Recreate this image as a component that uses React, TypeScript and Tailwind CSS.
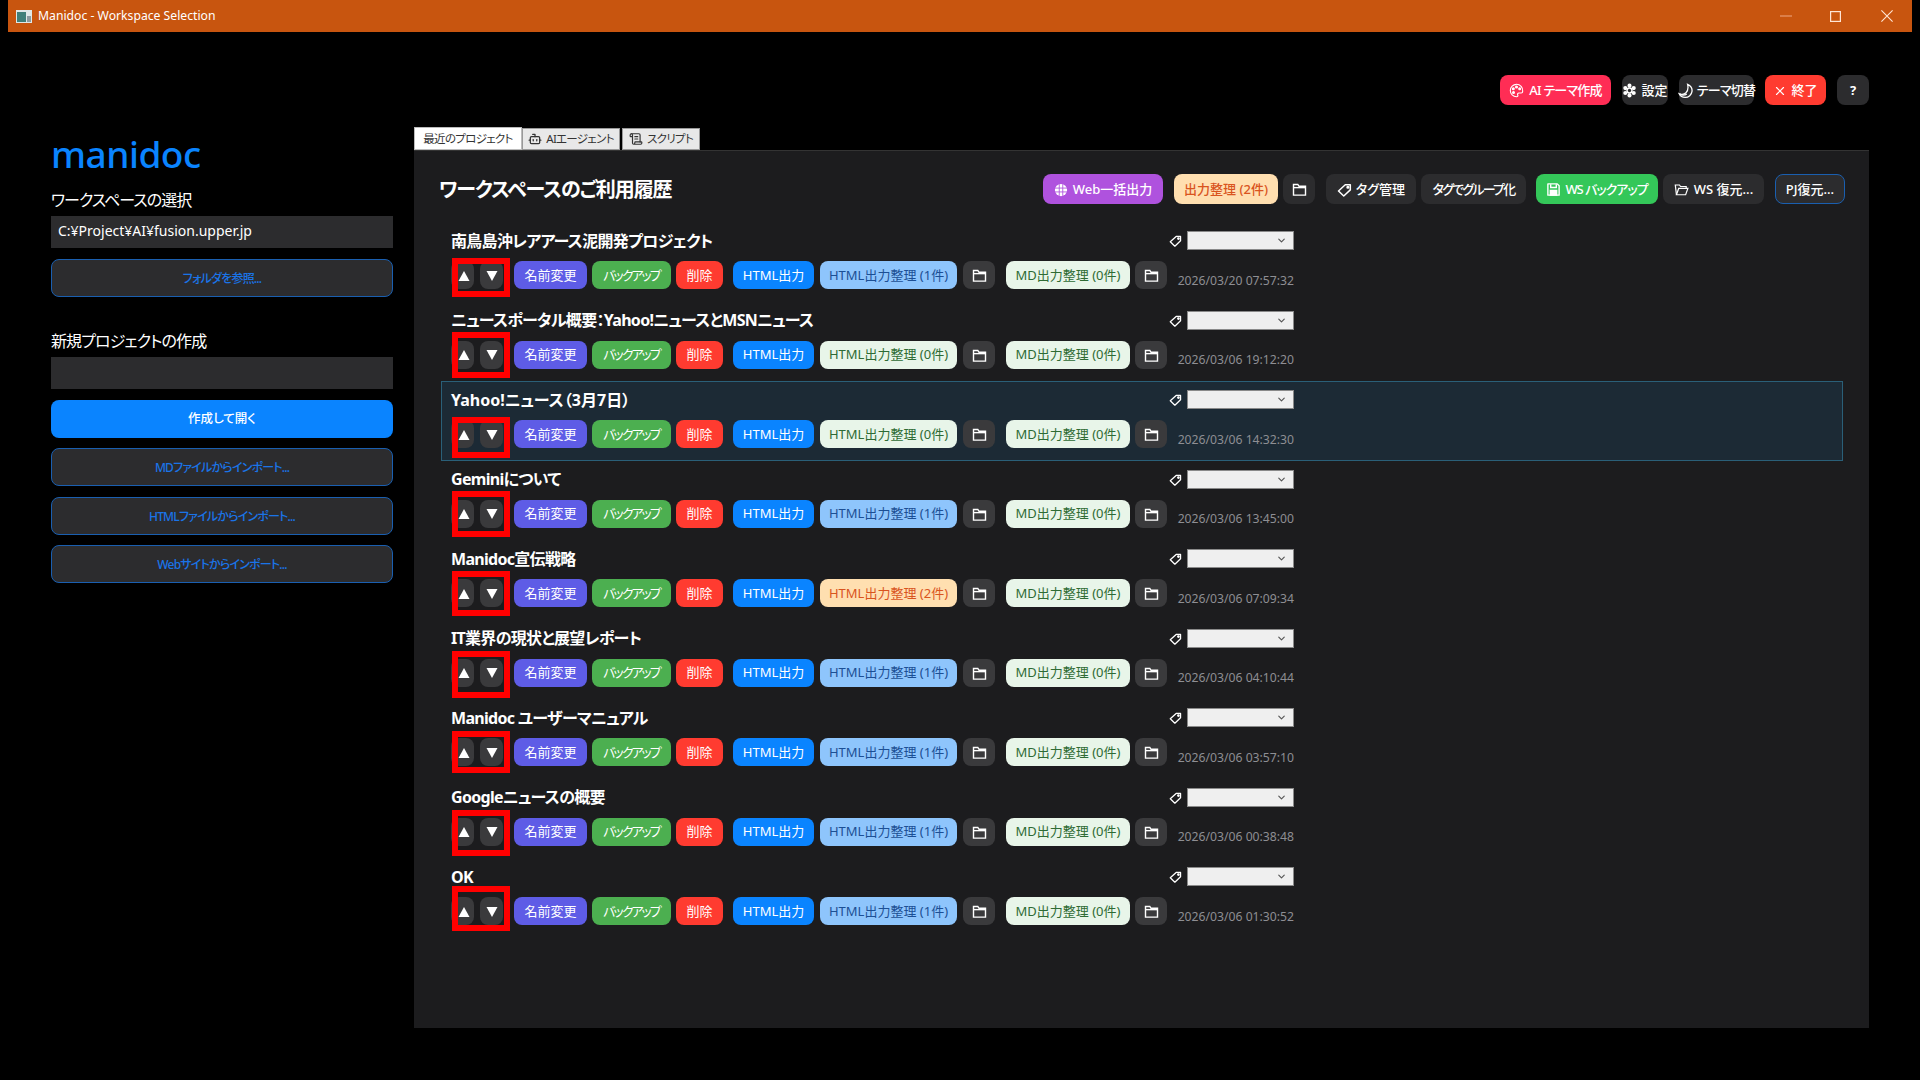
import { Bot, ScrollText, X, ChevronDown } from "lucide-react";

function FolderIcon({ className = "w-[15px] h-[15px]" }: { className?: string }) {
  return (
    <svg viewBox="0 0 16 16" className={className} fill="none" stroke="currentColor" strokeWidth="1.5">
      <path d="M1.6 14V2.6h4.6l1.3 2h6.9V14z" />
      <path d="M1.6 6h12.8" />
    </svg>
  );
}

function OpenFolderIcon() {
  return (
    <svg viewBox="0 0 16 16" className="h-[15px] w-[15px]" fill="none" stroke="currentColor" strokeWidth="1.3">
      <path d="M2.6 13.6 1.4 3.2h4.4l1.2 1.6h6v2" />
      <path d="M2.6 13.6h9.8l2.4-6.7H5z" />
    </svg>
  );
}

function TagIcon({ className = "w-[15px] h-[15px]" }: { className?: string }) {
  return (
    <svg viewBox="0 0 16 16" className={className} fill="none" stroke="currentColor" strokeWidth="1.6">
      <path d="M1.6 9.6 8.8 3h5.4v5.4l-7 6.6z" strokeLinejoin="round" />
      <circle cx="11.6" cy="5.6" r="0.9" fill="currentColor" />
    </svg>
  );
}

function GlobeIcon() {
  return (
    <svg viewBox="0 0 16 16" className="h-[14px] w-[14px]">
      <circle cx="8" cy="8" r="7" fill="#fff" />
      <path d="M1 5.8h14M1 10.2h14M6 1.4v13.2M10 1.4v13.2" stroke="#af52de" strokeWidth="1" fill="none" />
    </svg>
  );
}

function PaletteIcon() {
  return (
    <svg viewBox="0 0 16 16" className="h-[15px] w-[15px]" fill="none" stroke="#fff" strokeWidth="1.2">
      <path d="M8 1.4a6.6 6.6 0 1 0 0 13.2c1.6 0 1.8-1 1.3-1.9-.6-1.1.1-2 1.3-2h2.4c1 0 1.6-.7 1.6-1.9A6.6 6.6 0 0 0 8 1.4z" />
      <circle cx="4.6" cy="6" r="1" fill="#fff" />
      <circle cx="8" cy="4.2" r="1" fill="#fff" />
      <circle cx="11.4" cy="6" r="1" fill="#fff" />
      <circle cx="4.8" cy="10" r="1" fill="#fff" />
    </svg>
  );
}

function GearIcon() {
  return (
    <svg viewBox="0 0 16 16" className="h-[15px] w-[15px]" fill="#fff">
      <circle cx="8" cy="2.8" r="2.2" />
      <circle cx="12.5" cy="5.4" r="2.2" />
      <circle cx="12.5" cy="10.6" r="2.2" />
      <circle cx="8" cy="13.2" r="2.2" />
      <circle cx="3.5" cy="10.6" r="2.2" />
      <circle cx="3.5" cy="5.4" r="2.2" />
      <circle cx="8" cy="8" r="3.4" />
      <circle cx="8" cy="8" r="1.8" fill="#2c2c2e" />
    </svg>
  );
}

function MoonIcon() {
  return (
    <svg viewBox="0 0 16 16" className="h-[16px] w-[16px] shrink-0" fill="none" stroke="#fff" strokeWidth="1.3">
      <path d="M9.6 1.4c3 1.4 4.8 4 4.4 7-.4 3.4-3.4 6-6.8 6-2.6 0-5-1.4-6-3.6 2.4 1 5.2.6 6.8-1 1.8-1.8 2.4-5 1.6-8.4z" />
      <path d="M1.6 10.8c1.4 1.6 5 2 7.2.2" />
    </svg>
  );
}

function SaveIcon() {
  return (
    <svg viewBox="0 0 16 16" className="h-[15px] w-[15px]" fill="none" stroke="#fff" strokeWidth="1.5">
      <path d="M2 2h10l2 2v10H2z" strokeLinejoin="round" />
      <path d="M5 2.4v3.4h6V2.4" />
      <rect x="4.6" y="9" width="6.8" height="5" fill="#fff" />
    </svg>
  );
}

function Btn({ className, children }: { className: string; children: React.ReactNode }) {
  return (
    <button className={`flex items-center justify-center rounded-[8px] pt-[1px] text-[13px] whitespace-nowrap ${className}`}>
      {children}
    </button>
  );
}

function OutlineBtn({ label }: { label: string }) {
  return (
    <button className="h-[38px] w-full rounded-[8px] border border-[#1a5fb0] bg-[#2c2c2e] pt-[2px] text-[12px] font-medium tracking-[-0.8px] text-[#1a74e8]">
      {label}
    </button>
  );
}

const blue = "bg-[#8ec5fc] text-[#1c4f94]";
const pale = "bg-[#e8f5e9] text-[#2e6b34]";
const orange = "bg-[#ffdfb0] text-[#d9541e]";

// mark is the hand-drawn red box on each row: offset from the button row, and height
const projects = [
  { name: "南鳥島沖レアアース泥開発プロジェクト", html: 1, date: "2026/03/20 07:57:32", markTop: "top-[-3px]", markH: "h-[39px]" },
  { name: "ニュースポータル概要：Yahoo!ニュースとMSNニュース", html: 0, date: "2026/03/06 19:12:20", markTop: "top-[-9px]", markH: "h-[46px]" },
  { name: "Yahoo!ニュース（3月7日）", html: 0, date: "2026/03/06 14:32:30", active: true, markTop: "top-[-3px]", markH: "h-[41px]" },
  { name: "Geminiについて", html: 1, date: "2026/03/06 13:45:00", markTop: "top-[-9px]", markH: "h-[46px]" },
  { name: "Manidoc宣伝戦略", html: 2, date: "2026/03/06 07:09:34", markTop: "top-[-8px]", markH: "h-[45px]" },
  { name: "IT業界の現状と展望レポート", html: 1, date: "2026/03/06 04:10:44", markTop: "top-[-8px]", markH: "h-[47px]" },
  { name: "Manidoc ユーザーマニュアル", html: 1, date: "2026/03/06 03:57:10", markTop: "top-[-7px]", markH: "h-[42px]" },
  { name: "Googleニュースの概要", html: 1, date: "2026/03/06 00:38:48", markTop: "top-[-8px]", markH: "h-[46px]" },
  { name: "OK", html: 1, date: "2026/03/06 01:30:52", markTop: "top-[-11px]", markH: "h-[45px]" },
];

function ProjectRow({ p }: { p: (typeof projects)[number] }) {
  const htmlStyle = p.html === 2 ? orange : p.html === 1 ? blue : pale;
  return (
    <div
      className={`h-[79.5px] w-[1402px] border pl-[9px] pt-[8px] ${
        p.active ? "border-[#2a5f78] bg-[#1c2a35]" : "border-transparent"
      }`}
    >
      <div className="flex h-[19px] w-[843px] items-center justify-between">
        <span className={`text-[16px] font-bold text-white ${p.active ? "" : "tracking-[-0.7px]"}`}>{p.name}</span>
        <div className="flex items-center gap-[5px]">
          <TagIcon className="h-[13px] w-[13px] text-white" />
          <div className="flex h-[19px] w-[107px] items-center justify-end border border-[#8a8a8a] bg-[#efefef] pr-[6px]">
            <ChevronDown size={11} strokeWidth={2.5} className="text-[#555]" />
          </div>
        </div>
      </div>
      <div className="relative mt-[11px] flex h-[28px] w-[843px] items-center">
        <Btn className="h-full w-[23px] bg-[#3a3a3c] pl-[2px] text-white">
          <svg viewBox="0 0 12 12" className="h-[12px] w-[12px]" fill="#fff"><path d="M6 1 11.5 11H.5z" /></svg>
        </Btn>
        <Btn className="ml-[6px] h-full w-[23px] bg-[#3a3a3c] text-white">
          <svg viewBox="0 0 12 12" className="h-[12px] w-[12px]" fill="#fff"><path d="M6 11 11.5 1H.5z" /></svg>
        </Btn>
        <Btn className="ml-[11px] h-full w-[73px] bg-[#5e5ce6] text-white">名前変更</Btn>
        <Btn className="ml-[5px] h-full w-[79px] bg-[#4caf50] tracking-[-2px] text-white">バックアップ</Btn>
        <Btn className="ml-[5px] h-full w-[47px] bg-[#ff3b30] text-white">削除</Btn>
        <Btn className="ml-[10px] h-full w-[81px] bg-[#0a84ff] text-white">HTML出力</Btn>
        <Btn className={`ml-[6px] h-full w-[137px] ${htmlStyle}`}>{`HTML出力整理 (${p.html}件)`}</Btn>
        <Btn className="ml-[6px] h-full w-[32px] bg-[#3a3a3c] text-white"><FolderIcon /></Btn>
        <Btn className={`ml-[11px] h-full w-[124px] ${pale}`}>MD出力整理 (0件)</Btn>
        <Btn className="ml-[5px] h-full w-[32px] bg-[#3a3a3c] text-white"><FolderIcon /></Btn>
        <span className="ml-auto pt-[12px] text-[12.2px] whitespace-nowrap text-[#8e8e93]">{p.date}</span>
        {/* red annotation drawn over the sort buttons */}
        <div className={`pointer-events-none absolute left-[1px] w-[58px] border-[6px] border-[#ff0000] ${p.markTop} ${p.markH}`} />
      </div>
    </div>
  );
}

export default function App() {
  return (
    <div className="flex h-screen w-full flex-col overflow-hidden bg-black font-['Noto_Sans','Noto_Sans_CJK_JP',sans-serif] [font-feature-settings:'palt']">
      <div className="mx-[8px] flex h-[32px] shrink-0 items-center bg-[#c8550f] text-white">
        <svg viewBox="0 0 16 13" className="ml-[8px] h-[13px] w-[16px]">
          <rect width="16" height="13" fill="#dfe7e8" />
          <rect x="1" y="2" width="9" height="10" fill="#3f7f7a" />
          <rect x="11" y="6" width="4" height="6" fill="#8a9aa0" />
        </svg>
        <span className="ml-[6px] text-[12.2px]">Manidoc - Workspace Selection</span>
        <div className="ml-auto flex items-center">
          <svg viewBox="0 0 12 12" className="mr-[38px] h-[12px] w-[12px]" stroke="#e89a70" strokeWidth="1.2"><path d="M0 6h12" /></svg>
          <svg viewBox="0 0 11 11" className="mr-[40px] h-[11px] w-[11px]" fill="none" stroke="#ffe5d5" strokeWidth="1.2"><rect x=".6" y=".6" width="9.8" height="9.8" /></svg>
          <svg viewBox="0 0 12 12" className="mr-[19px] h-[12px] w-[12px]" stroke="#ffe5d5" strokeWidth="1.1"><path d="M.4.4l11.2 11.2M11.6.4.4 11.6" /></svg>
        </div>
      </div>

      <div className="mt-[43px] flex h-[30px] shrink-0 justify-end gap-[11px] pr-[51px] font-medium text-white">
        <Btn className="w-[111px] gap-[5px] bg-[#ff2d55] tracking-[-0.8px]"><PaletteIcon />AI テーマ作成</Btn>
        <Btn className="w-[46px] gap-[4px] bg-[#2c2c2e]"><GearIcon />設定</Btn>
        <Btn className="w-[75px] gap-[3px] bg-[#2c2c2e] tracking-[-0.8px]"><MoonIcon />テーマ切替</Btn>
        <Btn className="w-[61px] gap-[4px] bg-[#ff3b30]"><X size={14} />終了</Btn>
        <Btn className="w-[32px] bg-[#2c2c2e] font-bold">?</Btn>
      </div>

      <div className="mt-[22px] flex min-h-0 flex-1 pl-[51px]">
        <aside className="w-[342px] shrink-0">
          <div className="mt-[2px] text-[37px] leading-[50px] font-medium tracking-[-0.5px] text-[#0a84ff]">manidoc</div>
          <div className="mt-[9px] text-[16px] leading-[24px] tracking-[-1px] text-white">ワークスペースの選択</div>
          <div className="mt-[4px] flex h-[32px] items-center bg-[#2c2c2e] px-[7px] pb-[3px] text-[14px] text-white">
            C:¥Project¥AI¥fusion.upper.jp
          </div>
          <div className="mt-[11px]"><OutlineBtn label="フォルダを参照..." /></div>
          <div className="mt-[32px] text-[16px] leading-[24px] tracking-[-0.9px] text-white">新規プロジェクトの作成</div>
          <div className="mt-[4px] h-[32px] bg-[#2c2c2e]" />
          <button className="mt-[11px] h-[38px] w-full rounded-[8px] bg-[#0a84ff] pt-[1px] text-[12.5px] font-medium text-white">
            作成して開く
          </button>
          <div className="mt-[10px] flex flex-col gap-[10.5px]">
            <OutlineBtn label="MDファイルからインポート..." />
            <OutlineBtn label="HTMLファイルからインポート..." />
            <OutlineBtn label="Webサイトからインポート..." />
          </div>
        </aside>

        <main className="ml-[21px] w-[1455px] shrink-0">
          <div className="flex h-[23px] items-end text-[11.5px] tracking-[-0.7px] whitespace-nowrap text-[#333]">
            <div className="flex h-[23px] w-[108px] items-center justify-center border border-[#bbb] bg-white">最近のプロジェクト</div>
            <div className="flex h-[22px] w-[98px] items-center justify-center gap-[4px] border border-[#999] bg-[#e8e8e8]">
              <Bot size={14} strokeWidth={2.2} />AIエージェント
            </div>
            <div className="ml-[2px] flex h-[22px] w-[78px] items-center justify-center gap-[4px] border border-[#999] bg-[#e8e8e8]">
              <ScrollText size={14} />スクリプト
            </div>
          </div>
          <div className="h-[878px] border-t border-[#333] bg-[#1c1c1e] pl-[27px] pt-[23px]">
            <div className="flex h-[30px] w-[1404px] items-center justify-between">
              <h2 className="-ml-[2px] pt-[1px] text-[20px] font-bold tracking-[-1.1px] text-white">ワークスペースのご利用履歴</h2>
              <div className="flex h-full items-center font-medium text-white">
                <Btn className="h-full w-[120px] gap-[5px] bg-[#af52de]"><GlobeIcon />Web一括出力</Btn>
                <Btn className={`ml-[11px] h-full w-[104px] ${orange}`}>出力整理 (2件)</Btn>
                <Btn className="ml-[5px] h-full w-[32px] bg-[#2c2c2e]"><FolderIcon /></Btn>
                <Btn className="ml-[11px] h-full w-[90px] gap-[4px] bg-[#2c2c2e]"><TagIcon />タグ管理</Btn>
                <Btn className="ml-[5px] h-full w-[105px] bg-[#2c2c2e] tracking-[-1.8px]">タグでグループ化</Btn>
                <Btn className="ml-[10px] h-full w-[122px] gap-[4px] bg-[#34c759] tracking-[-1px]"><SaveIcon />WS バックアップ</Btn>
                <Btn className="ml-[5px] h-full w-[101px] gap-[5px] bg-[#2c2c2e]"><OpenFolderIcon />WS 復元...</Btn>
                <Btn className="ml-[11px] h-full w-[70px] border border-[#1a5fb0] bg-[#2c2c2e]">PJ復元...</Btn>
              </div>
            </div>
            <div className="mt-[18px] flex flex-col">
              {projects.map((p) => (
                <ProjectRow key={p.name} p={p} />
              ))}
            </div>
          </div>
        </main>
      </div>
    </div>
  );
}
